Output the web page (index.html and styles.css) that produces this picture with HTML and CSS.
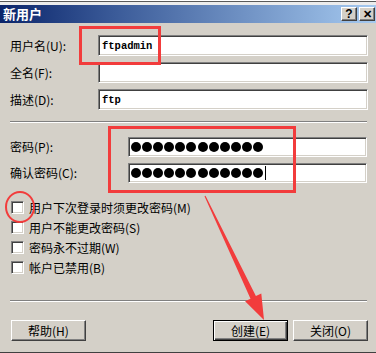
FILE: index.html
```html
<!DOCTYPE html>
<html lang="zh">
<head>
<meta charset="utf-8">
<title>新用户</title>
<link rel="stylesheet" href="styles.css">
</head>
<body>
<div class="window">
  <div class="topstrip"></div>
  <div class="titlebar">
    <span class="title">新用户</span>
    <div class="tbtns">
      <span class="tbtn">?</span>
      <span class="tbtn x">✕</span>
    </div>
  </div>
  <div class="content">
    <div class="fields">
      <label class="lbl">用户名(U):</label>
      <div class="input"><span class="val">ftpadmin</span></div>
      <label class="lbl">全名(F):</label>
      <div class="input"></div>
      <label class="lbl">描述(D):</label>
      <div class="input"><span class="val">ftp</span></div>
    </div>
    <div class="sep sep1"></div>
    <div class="pwfields">
      <label class="lbl">密码(P):</label>
      <div class="input pw">
        <span class="dots"><i></i><i></i><i></i><i></i><i></i><i></i><i></i><i></i><i></i><i></i><i></i><i></i></span>
      </div>
      <label class="lbl">确认密码(C):</label>
      <div class="input pw">
        <span class="dots"><i></i><i></i><i></i><i></i><i></i><i></i><i></i><i></i><i></i><i></i><i></i><i></i></span><span class="caret"></span>
      </div>
    </div>
    <div class="checks">
      <div class="chk"><span class="box"></span><span>用户下次登录时须更改密码(M)</span></div>
      <div class="chk"><span class="box"></span><span>用户不能更改密码(S)</span></div>
      <div class="chk"><span class="box"></span><span>密码永不过期(W)</span></div>
      <div class="chk"><span class="box"></span><span>帐户已禁用(B)</span></div>
    </div>
    <div class="sep sep2"></div>
    <div class="buttons">
      <button class="btn">帮助(H)</button>
      <button class="btn def">创建(E)</button>
      <button class="btn">关闭(O)</button>
    </div>
  </div>
</div>
<svg class="annot" width="376" height="353" viewBox="0 0 376 353">
  <rect x="80.5" y="27.5" width="79" height="36" fill="none" stroke="#f23c3c" stroke-width="3"/>
  <rect x="109.5" y="127.5" width="185" height="64" fill="none" stroke="#f23c3c" stroke-width="3"/>
  <ellipse cx="20" cy="207" rx="14" ry="15" fill="none" stroke="#f23c3c" stroke-width="2"/>
  <polygon points="204.5,196.2 205.5,195.8 255.9,296.1 261.3,293.5 264,320 245.1,301.3 250.5,298.7" fill="#f23c3c"/>
</svg>
</body>
</html>
```

FILE: styles.css
```css
html, body {
  margin: 0;
  padding: 0;
}
body {
  width: 376px;
  height: 353px;
  overflow: hidden;
  position: relative;
  background: #d4d0c8;
  font-family: "Noto Sans CJK SC", "Noto Sans", sans-serif;
  font-size: 12px;
  color: #000;
}
.window {
  height: 353px;
  box-sizing: border-box;
  border-bottom: 1px solid #404040;
  display: flex;
  flex-direction: column;
}
.topstrip {
  height: 5px;
  background: linear-gradient(#ffffff 0 1px, #5a5a5a 1px 2px, #ececec 2px 5px);
}
.titlebar {
  height: 18px;
  display: flex;
  align-items: center;
  justify-content: space-between;
  background: linear-gradient(to right, #0a246a 0%, #3a5a98 30%, #a6caf0 100%);
  padding: 0 1px 0 3px;
}
.title {
  color: #fff;
  font-weight: bold;
  font-size: 13px;
  line-height: 18px;
}
.tbtns {
  display: flex;
  gap: 2px;
}
.tbtn {
  width: 16px;
  height: 14px;
  box-sizing: border-box;
  background: #d4d0c8;
  border-top: 1px solid #fff;
  border-left: 1px solid #fff;
  border-right: 1px solid #404040;
  border-bottom: 1px solid #404040;
  box-shadow: inset -1px -1px 0 #808080;
  display: flex;
  align-items: center;
  justify-content: center;
  font-family: "Liberation Sans", sans-serif;
  font-weight: bold;
  font-size: 12px;
  line-height: 1;
}
.tbtn.x {
  font-size: 11px;
}
.content {
  flex: 1;
  padding: 12px 8px 0 10px;
  display: flex;
  flex-direction: column;
}
.fields {
  display: grid;
  grid-template-columns: 88px 270px;
  row-gap: 6px;
  align-items: center;
}
.fields .input {
  height: 21px;
}
.lbl {
  white-space: nowrap;
  line-height: 16px;
}
.input {
  box-sizing: border-box;
  background: #fff;
  border-top: 1px solid #808080;
  border-left: 1px solid #808080;
  border-right: 1px solid #fff;
  border-bottom: 1px solid #fff;
  box-shadow: inset 1px 1px 0 #404040, inset -1px -1px 0 #d4d0c8;
  display: flex;
  align-items: center;
  padding-left: 3px;
}
.val {
  font-family: "Liberation Mono", "DejaVu Sans Mono", monospace;
  font-size: 10.5px;
  font-weight: bold;
}
.sep {
  height: 0;
  border-top: 1px solid #808080;
  border-bottom: 1px solid #fff;
  width: 357px;
}
.sep1 {
  margin-top: 11px;
}
.pwfields {
  margin-top: 14px;
  display: grid;
  grid-template-columns: 118px 239px;
  row-gap: 6px;
  align-items: center;
}
.pw {
  height: 20px;
  padding-left: 2px;
}
.dots {
  display: flex;
  gap: 1.1px;
}
.dots i {
  display: block;
  width: 10px;
  height: 10px;
  border-radius: 50%;
  background: #000;
}
.caret {
  width: 1px;
  height: 14px;
  background: #000;
  margin-left: 2px;
}
.checks {
  margin-top: 14px;
  display: flex;
  flex-direction: column;
}
.chk {
  height: 20px;
  display: flex;
  align-items: center;
  gap: 5px;
  padding-left: 1px;
}
.box {
  width: 13px;
  height: 13px;
  box-sizing: border-box;
  background: #fff;
  border-top: 1px solid #808080;
  border-left: 1px solid #808080;
  border-right: 1px solid #fff;
  border-bottom: 1px solid #fff;
  box-shadow: inset 1px 1px 0 #404040, inset -1px -1px 0 #d4d0c8;
}
.sep2 {
  margin-top: 23px;
}
.buttons {
  margin-top: 18px;
  display: flex;
  gap: 5px;
  padding-left: 1px;
}
.btn {
  width: 75px;
  height: 21px;
  box-sizing: border-box;
  margin: 0;
  padding: 0;
  background: #d4d0c8;
  border-top: 1px solid #fff;
  border-left: 1px solid #fff;
  border-right: 1px solid #404040;
  border-bottom: 1px solid #404040;
  box-shadow: inset -1px -1px 0 #808080;
  font-family: "Noto Sans CJK SC", sans-serif;
  font-size: 12px;
  color: #000;
  line-height: 1;
}
.btn.def {
  margin-left: auto;
  border: 1px solid #000;
  box-shadow: inset 1px 1px 0 #fff, inset -1px -1px 0 #404040, inset -2px -2px 0 #808080;
}
.annot {
  position: absolute;
  left: 0;
  top: 0;
  pointer-events: none;
}
```
